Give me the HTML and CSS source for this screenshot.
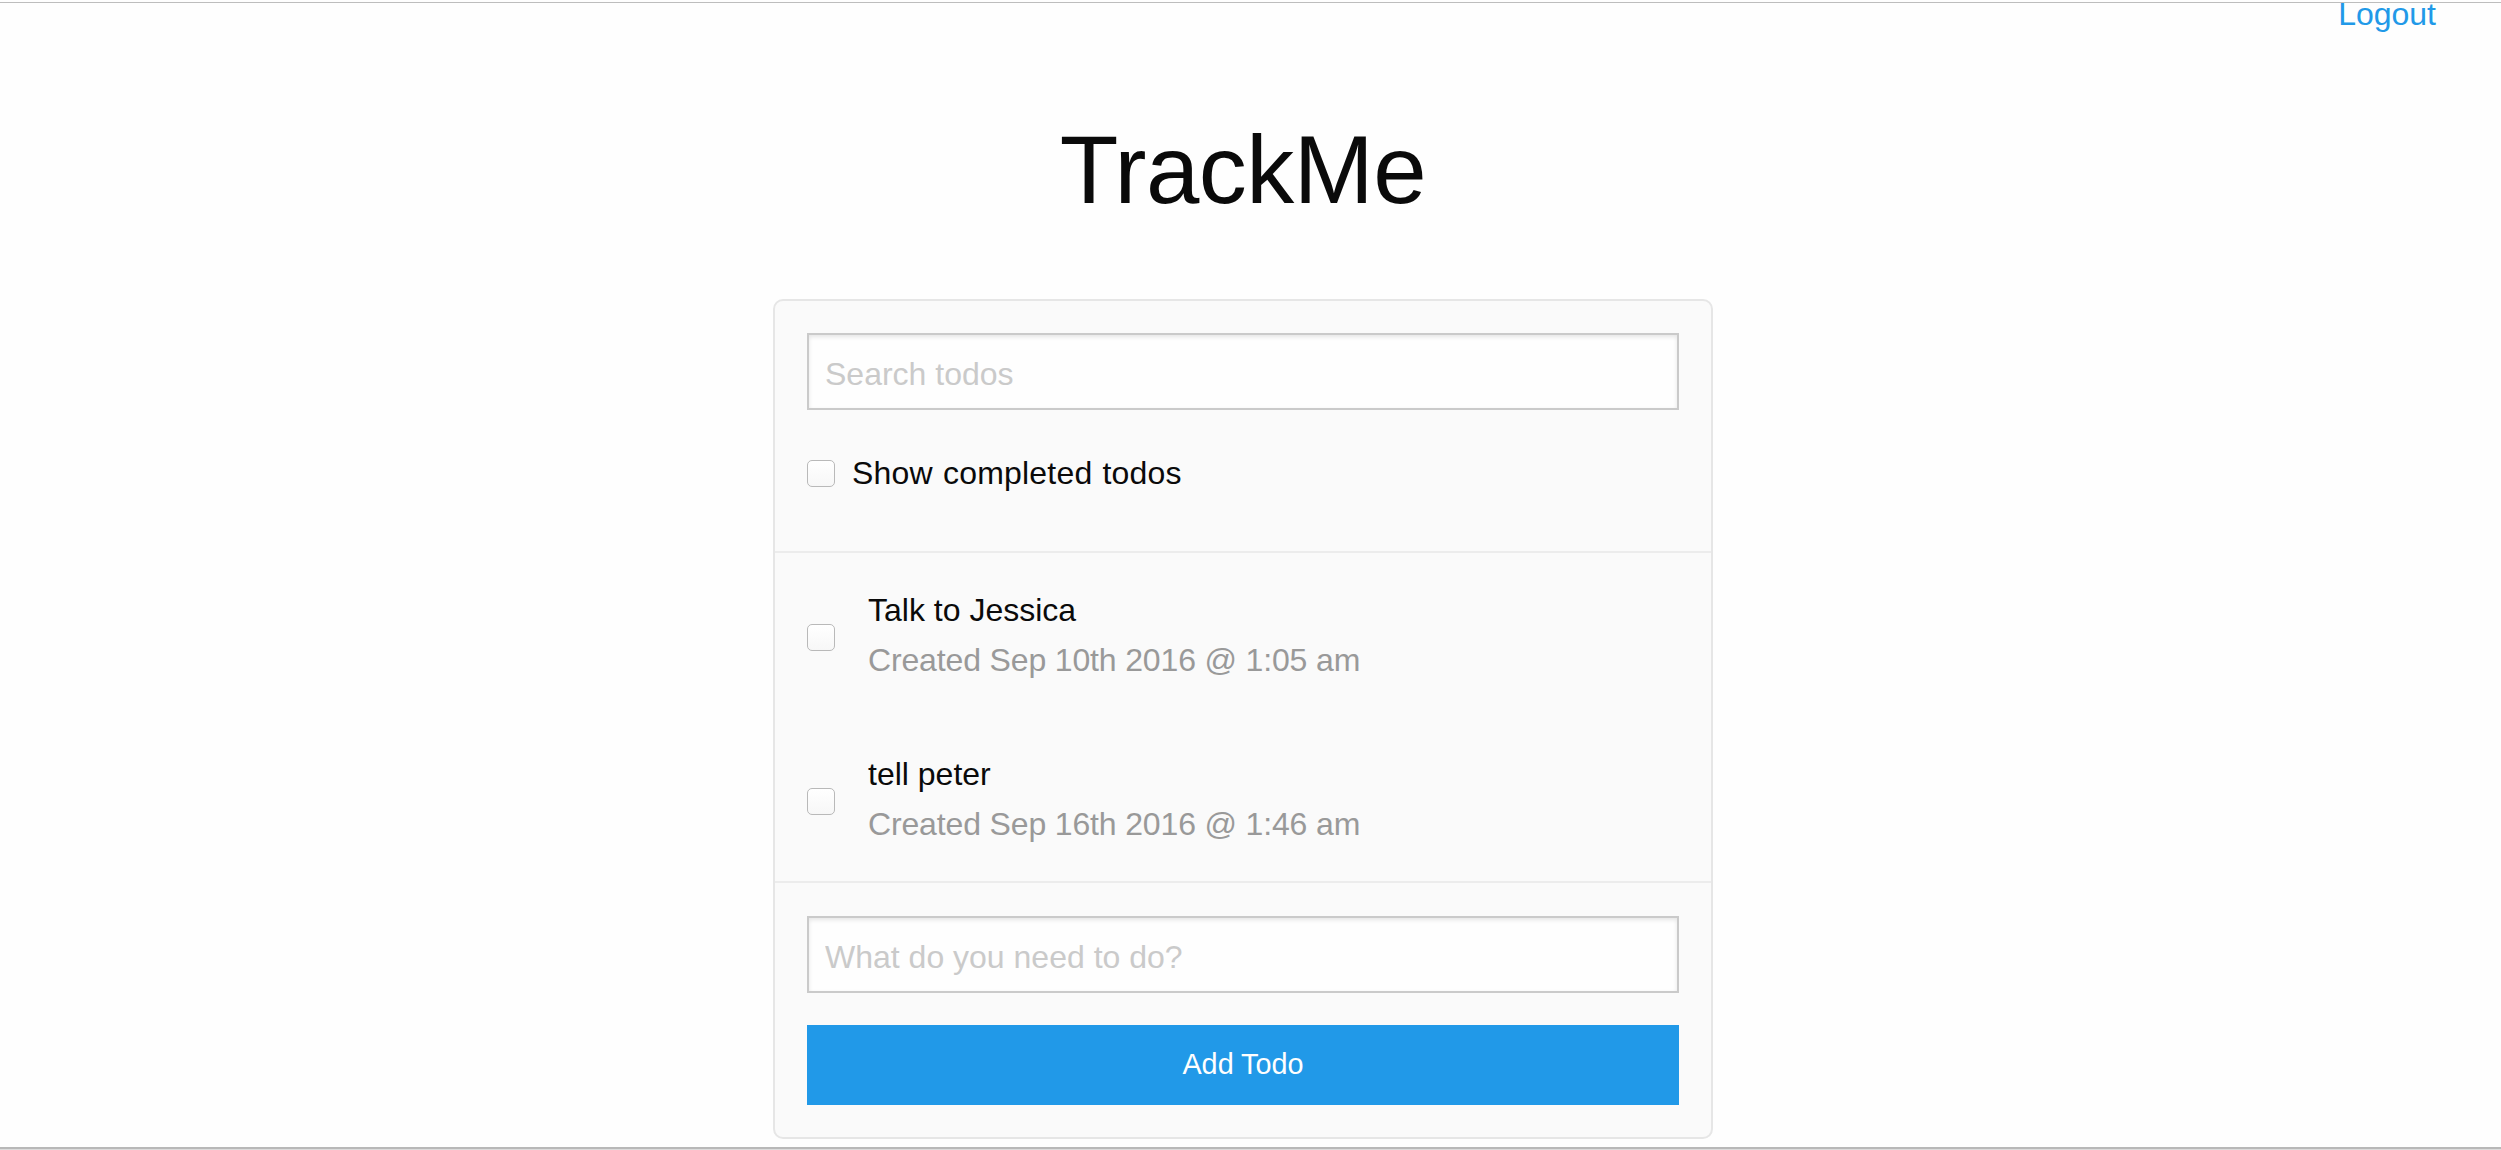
FILE: index.html
```html
<!DOCTYPE html>
<html lang="en">
<head>
<meta charset="utf-8">
<title>TrackMe</title>
<link rel="stylesheet" href="styles.css">
</head>
<body>
<div class="page">
  <header class="topbar">
    <a class="logout" href="#">Logout</a>
  </header>
  <main class="main">
    <h1 class="title">TrackMe</h1>
    <section class="card">
      <div class="card-section search-section">
        <input class="text-input" type="search" placeholder="Search todos">
        <label class="check-row">
          <input class="check" type="checkbox">
          <span class="check-label">Show completed todos</span>
        </label>
      </div>
      <div class="card-section todo-list">
        <div class="todo">
          <input class="check todo-check" type="checkbox">
          <div class="todo-body">
            <p class="todo-text">Talk to Jessica</p>
            <p class="todo-sub">Created Sep 10th 2016 @ 1:05 am</p>
          </div>
        </div>
        <div class="todo">
          <input class="check todo-check" type="checkbox">
          <div class="todo-body">
            <p class="todo-text">tell peter</p>
            <p class="todo-sub">Created Sep 16th 2016 @ 1:46 am</p>
          </div>
        </div>
      </div>
      <div class="card-section add-section">
        <input class="text-input" type="text" placeholder="What do you need to do?">
        <button class="button" type="button">Add Todo</button>
      </div>
    </section>
  </main>
  <div class="bottomline"></div>
</div>
</body>
</html>
```

FILE: styles.css
```css
html {
  margin: 0;
  padding: 2px 0 0 0;
  background: #fefefe;
  overflow: hidden;
  height: 1150px;
  box-sizing: border-box;
}
body {
  margin: 0;
  border-top: 1px solid #bdbdbd;
  font-family: "Liberation Sans", Arial, Helvetica, sans-serif;
  color: #0a0a0a;
}
.page {
  padding-right: 15px;
}
.topbar {
  margin-top: -3px;
  height: 28px;
  display: flex;
  justify-content: flex-end;
  padding-right: 50px;
}
.logout {
  font-size: 32px;
  line-height: 28px;
  color: #2199e8;
  text-decoration: none;
}
.main {
  display: flex;
  flex-direction: column;
  align-items: center;
}
.title {
  margin: 75px 0 62px 0;
  font-size: 96px;
  line-height: 134px;
  font-weight: 400;
  letter-spacing: -0.5px;
  text-align: center;
}
.card {
  width: 940px;
  box-sizing: border-box;
  background: #fafafa;
  border: 2px solid #e6e6e6;
  border-radius: 10px;
}
.card-section {
  padding: 0 32px;
}
.search-section {
  padding-top: 32px;
  padding-bottom: 56px;
  border-bottom: 2px solid #ececec;
}
.text-input {
  display: block;
  width: 100%;
  height: 77px;
  box-sizing: border-box;
  margin: 0;
  padding: 6px 16px 0 16px;
  border: 2px solid #cacaca;
  border-radius: 0;
  background: #fefefe;
  box-shadow: inset 0 2px 4px rgba(10, 10, 10, 0.1);
  font-family: inherit;
  font-size: 32px;
  color: #0a0a0a;
  -webkit-appearance: none;
  appearance: none;
  outline: none;
}
.text-input::placeholder {
  color: #cacaca;
}
.search-section .text-input {
  margin-bottom: 37px;
}
.check-row {
  display: flex;
  align-items: flex-start;
  height: 48px;
}
.check {
  -webkit-appearance: none;
  appearance: none;
  margin: 0;
  flex: none;
  width: 28px;
  height: 27px;
  box-sizing: border-box;
  border: 1px solid #b9b9b9;
  border-radius: 5px;
  background: linear-gradient(#ffffff, #f7f7f7);
}
.check-row .check {
  margin-top: 13px;
}
.check-label {
  margin-left: 17px;
  padding-top: 2px;
  font-size: 32px;
  line-height: 48px;
  word-spacing: 1px;
  letter-spacing: 0.2px;
}
.todo-list {
  border-bottom: 2px solid #ececec;
}
.todo {
  display: flex;
  align-items: flex-start;
  padding: 32px 0;
}
.todo-check {
  margin-top: 39px;
}
.todo-body {
  margin-left: 33px;
}
.todo-text,
.todo-sub {
  margin: 0;
  font-size: 32px;
  line-height: 50px;
}
.todo-sub {
  color: #999999;
  letter-spacing: -0.15px;
}
.add-section {
  padding-top: 33px;
  padding-bottom: 32px;
}
.add-section .text-input {
  margin-bottom: 32px;
}
.button {
  display: block;
  width: 100%;
  height: 80px;
  margin: 0;
  padding: 0 0 1px 0;
  border: 0;
  border-radius: 0;
  background: #2199e8;
  color: #fefefe;
  font-family: inherit;
  font-size: 28.8px;
  cursor: pointer;
}
.bottomline {
  margin-top: 8px;
  margin-right: -15px;
  height: 2px;
  background: #b8b8b8;
  border-bottom: 1px solid #dcdcdc;
}
```
